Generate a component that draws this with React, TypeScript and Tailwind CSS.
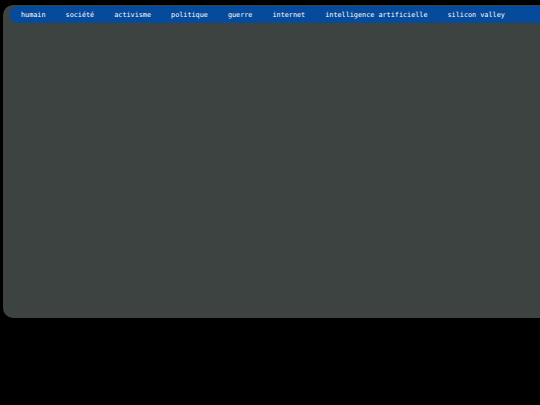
const topics = [
    "humain",
    "société",
    "activisme",
    "politique",
    "guerre",
    "internet",
    "intelligence artificielle",
    "silicon valley",
];

export default function App() {
    return (
        <div className="w-[540px] h-[405px] bg-black pt-[5px] pl-[3px] overflow-hidden">
            {/* panneau principal */}
            <div className="h-[313px] bg-[#3c4340] rounded-l-[10px] pt-[1px] pl-[7px]">
                <nav className="h-[17px] bg-[#064b9b] rounded-l-[8px] pl-[11px] pt-[2px] flex items-center gap-[20px] text-[6.8px] text-white font-['DejaVu_Sans_Mono',monospace] whitespace-nowrap">
                    {topics.map((t) => (
                        <span key={t}>{t}</span>
                    ))}
                </nav>
            </div>
        </div>
    );
}
